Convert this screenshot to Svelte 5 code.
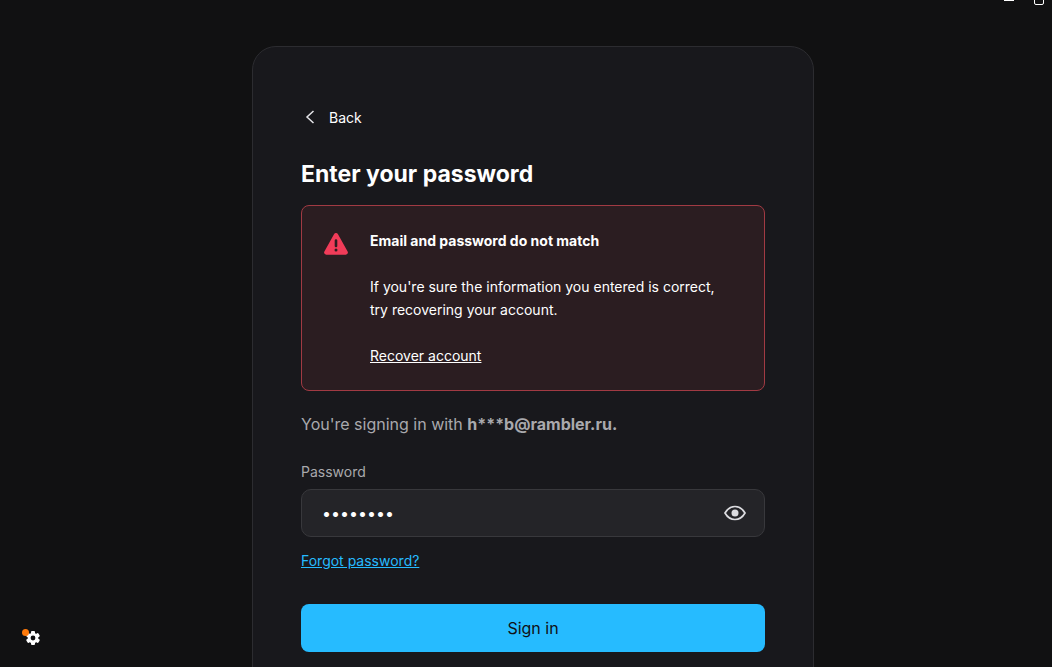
<script lang="ts">
	let email = $state('h***b@rambler.ru');
	let password = $state('password');
	let showPassword = $state(false);
	let mismatch = $state(true);

	function submit(e: SubmitEvent) {
		e.preventDefault();
		mismatch = true;
	}
</script>

<div class="page">
	<div class="window-controls">
		<button aria-label="Minimize">
			<svg width="12" height="12" viewBox="0 0 12 12"><path d="M1 7.5H11" /></svg>
		</button>
		<button aria-label="Maximize">
			<svg width="12" height="12" viewBox="0 0 12 12"><rect x="1.5" y="1.5" width="9" height="10" rx="1.5" /></svg>
		</button>
	</div>

	<main class="card">
		<button class="back">
			<svg width="20" height="20" viewBox="0 0 20 20"><path d="M12.5 4L6 10L12.5 16" /></svg>
			Back
		</button>

		<h1>Enter your password</h1>

		{#if mismatch}
			<div class="alert" role="alert">
				<svg class="warning" width="26" height="24" viewBox="0 0 26 24">
					<path d="M11 2.2a2.3 2.3 0 0 1 4 0l9.6 17.2a2.2 2.2 0 0 1-1.9 3.3H3.3a2.2 2.2 0 0 1-1.9-3.3z" fill="#f13c59" />
					<path d="M13 8.6V14" stroke="#2b1d21" stroke-width="2.6" stroke-linecap="round" />
					<circle cx="13" cy="18" r="1.5" fill="#2b1d21" />
				</svg>
				<div class="message">
					<strong>Email and password do not match</strong>
					<p>If you're sure the information you entered is correct, try recovering your account.</p>
					<a href="#recover">Recover account</a>
				</div>
			</div>
		{/if}

		<p class="account">You're signing in with <b>{email}.</b></p>

		<form onsubmit={submit}>
			<label for="password">Password</label>
			<div class="field">
				<input id="password" type={showPassword ? 'text' : 'password'} bind:value={password} />
				<button type="button" class="reveal" aria-label="Show password" onclick={() => showPassword = !showPassword}>
					<svg width="24" height="24" viewBox="0 0 24 24">
						<path d="M2 12C4.4 7.8 8 5.5 12 5.5S19.6 7.8 22 12C19.6 16.2 16 18.5 12 18.5S4.4 16.2 2 12Z" />
						<circle cx="12" cy="12" r="3.5" />
					</svg>
				</button>
			</div>
			<a class="forgot" href="#forgot">Forgot password?</a>
			<button class="submit">Sign in</button>
		</form>
	</main>

	<button class="settings" aria-label="Settings">
		<svg width="20" height="20" viewBox="0 0 20 20">
			<g transform="translate(11 11)">
				{#each [0, 60, 120] as angle}
					<rect x="-2" y="-7" width="4" height="14" rx="1" fill="#fff" transform="rotate({angle})" />
				{/each}
				<circle r="5.3" fill="#fff" />
				<circle r="2.4" fill="#111112" />
			</g>
			<circle cx="3.5" cy="5.5" r="3.5" fill="#ff7a0a" />
		</svg>
	</button>
</div>

<style>
	:global(body) { background: #111112; }
	.page { position: relative; box-sizing: border-box; height: 100vh; overflow: hidden; padding: 46px 0 0 14px; color: #fff; font-family: Inter, "Liberation Sans", sans-serif; font-size: 14px; line-height: 23px; }
	button { padding: 0; border: none; background: none; color: inherit; font: inherit; cursor: pointer; }
	svg { display: block; fill: none; }
	.window-controls { position: absolute; top: -7px; right: 7px; display: flex; gap: 18px; }
	.window-controls svg { stroke: #fff; }
	.card { box-sizing: border-box; max-width: 562px; margin: 0 auto; padding: 58px 48px 48px; border: 1px solid #2c2c30; border-radius: 24px; background: #18181c; }
	.back { display: flex; align-items: center; gap: 8px; height: 24px; }
	.back svg { stroke: #e4e4e8; stroke-width: 1.5; }
	h1 { margin: 29px 0 15px; font-size: 23px; line-height: 32px; font-weight: 700; }
	.alert { display: flex; gap: 21px; padding: 23px 36px 23px 21px; border: 1px solid #a13a43; border-radius: 8px; background: #2b1d21; }
	.warning { flex: none; margin-top: 3px; }
	.message strong { display: block; font-weight: 700; }
	.message p { margin: 23px 0; }
	.message a { color: inherit; }
	.account { margin: 21px 0 24px; color: #a9a9ad; font-size: 16px; line-height: 24px; }
	label { display: block; margin-bottom: 6px; color: #a9a9ad; }
	.field { display: flex; align-items: center; box-sizing: border-box; height: 48px; padding: 0 17px 0 20px; border: 1px solid #38383c; border-radius: 10px; background: #242428; }
	input { flex: 1; min-width: 0; padding: 0; border: none; outline: none; background: none; color: #fff; font: inherit; font-size: 16px; }
	.reveal svg { stroke: #dcdce0; stroke-width: 1.7; }
	.reveal circle { fill: #dcdce0; stroke: none; }
	.forgot { display: block; width: fit-content; margin: 12px 0 32px; color: #26bbff; }
	.submit { display: block; width: 100%; height: 48px; border-radius: 8px; background: #26bbff; color: #101014; font-size: 16px; }
	.settings { position: absolute; left: 22px; bottom: 20px; }
</style>
